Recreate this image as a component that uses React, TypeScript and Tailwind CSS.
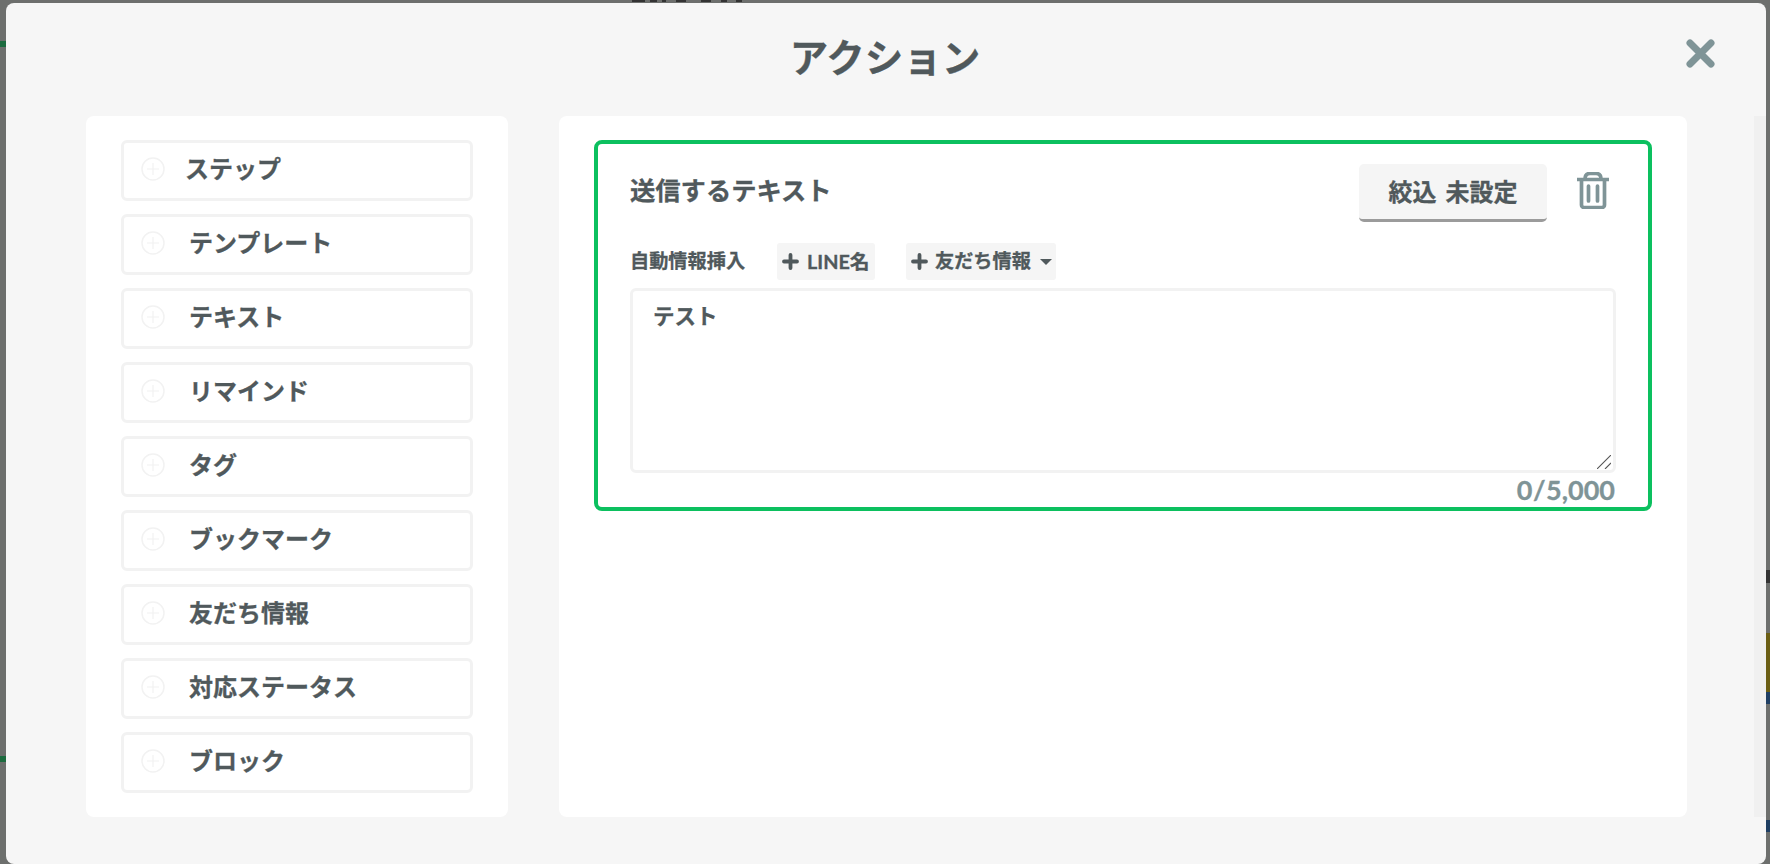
const menuItems = [
  { label: 'ステップ', textClass: 'ml-[20px]' },
  { label: 'テンプレート', textClass: 'ml-[24px]' },
  { label: 'テキスト', textClass: 'ml-[24px]' },
  { label: 'リマインド', textClass: 'ml-[24px]' },
  { label: 'タグ', textClass: 'ml-[24px]' },
  { label: 'ブックマーク', textClass: 'ml-[24px]' },
  { label: '友だち情報', textClass: 'ml-[24px]' },
  { label: '対応ステータス', textClass: 'ml-[24px]' },
  { label: 'ブロック', textClass: 'ml-[24px]' },
]

function PlusCircle() {
  return (
    <svg viewBox="0 0 24 24" className="size-[24px] shrink-0 text-[#f2f2f2]" fill="none" stroke="currentColor">
      <circle cx="12" cy="12" r="11" strokeWidth="1.5" />
      <path d="M12 6v12M6 12h12" strokeWidth="1.2" />
    </svg>
  )
}

function PlusIcon() {
  return (
    <svg viewBox="0 0 17 17" className="size-[17px] shrink-0 text-[#50595c]" fill="none" stroke="currentColor" strokeWidth="3.8" strokeLinecap="round">
      <path d="M8.5 2v13M2 8.5h13" />
    </svg>
  )
}

function TrashIcon() {
  return (
    <svg viewBox="0 0 32 37" className="h-[37px] w-[32px] text-[#7f9497]" fill="none" stroke="currentColor" strokeWidth="3.7" strokeLinecap="round" strokeLinejoin="round">
      <path d="M1 7.5h30" />
      <path d="M8 7c0-3.5 2-5.5 5-5.5h6c3 0 5 2 5 5.5" />
      <path d="M4.5 8v25a2.5 2.5 0 0 0 2.5 2.5h18a2.5 2.5 0 0 0 2.5-2.5V8" />
      <path d="M11.5 14v15M20.5 14v15" />
    </svg>
  )
}

function CloseIcon() {
  return (
    <svg viewBox="0 0 29 29" className="size-[29px] text-[#7f9497]" fill="none" stroke="currentColor" strokeWidth="7" strokeLinecap="round">
      <path d="M4 4l21 21M25 4L4 25" />
    </svg>
  )
}

function ResizeGrip() {
  return (
    <svg viewBox="0 0 14 14" className="absolute bottom-[4px] right-[5px] size-[14px] text-[#555555]" fill="none" stroke="currentColor" strokeWidth="1.1">
      <path d="M0 14L14 0M8 14l6-6" />
    </svg>
  )
}

export default function App() {
  return (
    <div className="relative h-[864px] w-[1770px] overflow-hidden bg-[#6d6f6d] pl-[6px] pr-[4px] pt-[3px] font-['Lato','Noto_Sans_CJK_JP',sans-serif] text-[#50595c] [-webkit-text-stroke-width:0.3px]">
      {/* bits of the page behind the modal */}
      <div className="absolute left-0 top-[41px] h-[6px] w-[6px] bg-[#1c6b3f]" />
      <div className="absolute left-0 top-[756px] h-[6px] w-[6px] bg-[#1c6b3f]" />
      <div className="absolute left-[632px] top-0 flex h-[2px] gap-[5px]">
        <div className="w-[13px] bg-[#333333]" />
        <div className="w-[7px] bg-[#333333]" />
        <div className="mr-[5px] w-[4px] bg-[#333333]" />
        <div className="mr-[10px] w-[10px] bg-[#333333]" />
        <div className="mr-[5px] w-[10px] bg-[#333333]" />
        <div className="mr-[4px] w-[6px] bg-[#333333]" />
        <div className="w-[6px] bg-[#333333]" />
      </div>
      <div className="absolute right-0 top-[570px] h-[13px] w-[4px] bg-[#333333]" />
      <div className="absolute right-0 top-[633px] h-[59px] w-[4px] bg-[#6b5e14]" />
      <div className="absolute right-0 top-[692px] h-[12px] w-[4px] bg-[#1f3f63]" />
      <div className="absolute right-0 top-[820px] h-[12px] w-[4px] bg-[#1f3f63]" />

      <div className="relative flex h-[861px] flex-col rounded-[8px] bg-[#f6f6f6]">
        <header className="flex h-[113px] shrink-0 items-center justify-center pb-[4px]">
          <h1 className="mr-[2px] text-[38.5px] font-bold">アクション</h1>
          <button className="absolute right-[51px] top-[36px]">
            <CloseIcon />
          </button>
        </header>

        <div className="flex h-[701px] pl-[80px]">
          <aside className="flex w-[422px] shrink-0 flex-col gap-[13px] rounded-[8px] bg-white px-[35px] py-[24px]">
            {menuItems.map((item) => (
              <div key={item.label} className="flex h-[61.125px] items-center rounded-[6px] border-[3px] border-[#f2f2f2] pb-[4px] pl-[17px]">
                <PlusCircle />
                <span className={`text-[24px] font-bold ${item.textClass}`}>{item.label}</span>
              </div>
            ))}
          </aside>

          <main className="ml-[51px] w-[1128px] shrink-0 rounded-[8px] bg-white px-[35px] pt-[24px]">
            <section className="flex h-[371px] flex-col rounded-[8px] border-4 border-[#0cc05f] px-[32px] pt-[20px]">
              <div className="flex h-[58px] items-start justify-between">
                <h2 className="mt-[8px] text-[25.3px] font-bold">送信するテキスト</h2>
                <div className="flex items-start">
                  <button className="flex h-[58px] w-[188px] items-center justify-center rounded-[5px] border-b-[3px] border-[#9b9b9b] bg-[#f5f5f5] text-[24px] font-bold [word-spacing:3px]">
                    絞込 未設定
                  </button>
                  <span className="ml-[30px] mr-[7px] mt-[8px]">
                    <TrashIcon />
                  </span>
                </div>
              </div>

              <div className="mt-[21px] flex h-[37px] items-center text-[19.2px] font-bold">
                <span className="w-[147px]">自動情報挿入</span>
                <button className="flex h-[37px] w-[98px] items-center gap-[8px] rounded-[3px] bg-[#f5f5f5] pl-[5px] text-[19.8px]">
                  <PlusIcon />
                  LINE名
                </button>
                <button className="ml-[31px] flex h-[37px] w-[150px] items-center gap-[7px] rounded-[3px] bg-[#f5f5f5] pl-[5px]">
                  <PlusIcon />
                  友だち情報
                  <span className="ml-[2px] h-0 w-0 border-x-[6.5px] border-t-[6px] border-x-transparent border-t-[#50595c]" />
                </button>
              </div>

              <div className="relative mt-[8px]">
                <textarea
                  defaultValue="テスト"
                  className="block h-[185px] w-full resize-none rounded-[6px] border-[3px] border-[#f2f2f2] px-[20px] py-[9px] text-[21.5px] font-bold text-[#50595c] outline-none"
                />
                <ResizeGrip />
              </div>
              <div className="pr-[1px] pt-[2px] text-right text-[27px] font-bold leading-[30px] text-[#7f9497]">
                0<span className="mx-[0.5px]">/</span>5,000
              </div>
            </section>
          </main>

          <div className="ml-auto w-[12px] shrink-0 bg-[#f0f0f0]" />
        </div>
      </div>
    </div>
  )
}
